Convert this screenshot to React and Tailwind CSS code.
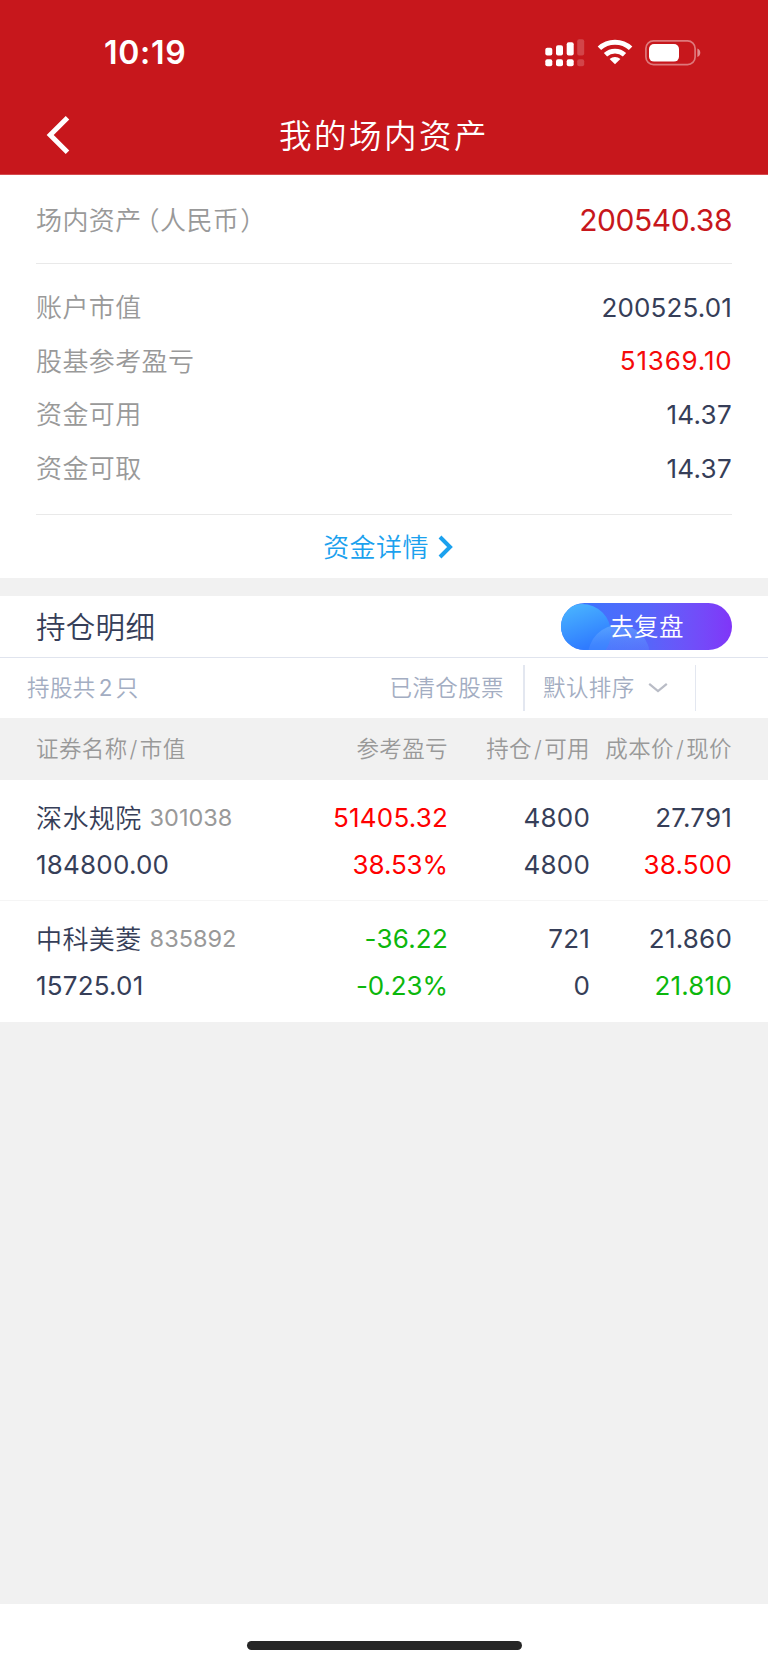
const summary = [
  { label: '账户市值', value: '200525.01', color: 'text-[#363e58] tracking-[0.15px]' },
  { label: '股基参考盈亏', value: '51369.10', color: 'text-[#f50a0a] tracking-[0.8px] -mr-[0.5px]' },
  { label: '资金可用', value: '14.37', color: 'text-[#363e58] tracking-[0.3px]' },
  { label: '资金可取', value: '14.37', color: 'text-[#363e58] tracking-[0.3px]' },
];

const holdings = [
  {
    name: '深水规院',
    code: '301038',
    marketValue: '184800.00',
    profit: '51405.32',
    profitRate: '38.53%',
    amount: '4800',
    available: '4800',
    cost: '27.791',
    price: '38.500',
    color: 'text-[#ff0000]',
  },
  {
    name: '中科美菱',
    code: '835892',
    marketValue: '15725.01',
    profit: '-36.22',
    profitRate: '-0.23%',
    amount: '721',
    available: '0',
    cost: '21.860',
    price: '21.810',
    color: 'text-[#0cb70c]',
  },
];

function SignalIcon() {
  return (
    <svg width="40" height="28" viewBox="0 0 40 28" fill="#fff">
      <rect x="0.3" y="8.7" width="7" height="7.8" rx="2" />
      <rect x="11" y="6.2" width="7" height="10.3" rx="2" />
      <rect x="21.7" y="3.2" width="7" height="13.3" rx="2" />
      <rect x="32.2" y="0.2" width="7" height="16.3" rx="2" opacity="0.2" />
      <rect x="0.3" y="20.2" width="7" height="7" rx="2" />
      <rect x="11" y="20.2" width="7" height="7" rx="2" />
      <rect x="21.7" y="20.2" width="7" height="7" rx="2" />
      <rect x="32.2" y="20.2" width="7" height="7" rx="2" opacity="0.2" />
    </svg>
  );
}

function WifiIcon() {
  return (
    <svg width="36" height="26" viewBox="0 0 36 26" fill="none" stroke="#fff" strokeWidth="5">
      <path d="M2.4 9.3C11 1.1 25 1.1 33.6 9.3" />
      <path d="M8.5 15.8C13.8 10.8 22.2 10.8 27.5 15.8" strokeWidth="4.8" />
      <path d="M18 25.2L12.6 20C15.6 17.3 20.4 17.3 23.4 20Z" fill="#fff" stroke="none" />
    </svg>
  );
}

function BatteryIcon() {
  return (
    <svg width="56" height="26" viewBox="0 0 56 26">
      <rect x="0.9" y="0.9" width="49.2" height="23.8" rx="7.6" fill="none" stroke="#fff" strokeWidth="1.7" opacity="0.42" />
      <rect x="4" y="4" width="30" height="17.6" rx="5" fill="#fff" />
      <path d="M52.4 8.6C54.4 9.4 55.3 11 55.3 12.8S54.4 16.2 52.4 17Z" fill="#fff" opacity="0.5" />
    </svg>
  );
}

function Header() {
  return (
    <header className="h-[175px] bg-[#c7171c] border-b border-[#d54a4e] text-white">
      <div className="h-[97px] pt-2 pl-[104px] pr-[67px] flex items-center justify-between">
        <span className="pt-px text-[32px] font-[580] leading-none tracking-[0.7px]">10:19</span>
        <div className="flex items-center">
          <SignalIcon />
          <span className="ml-3 -mt-px">
            <WifiIcon />
          </span>
          <span className="ml-3">
            <BatteryIcon />
          </span>
        </div>
      </div>
      <div className="h-[76px] px-[46px] grid grid-cols-[60px_1fr_60px] items-center">
        <svg width="24" height="40" viewBox="0 0 24 40" fill="none" stroke="#fff" strokeWidth="5">
          <path d="M21.5 2.8L4.2 20L21.5 37.2" />
        </svg>
        <h1 className="pt-[5px] text-[32.5px] font-[350] leading-none tracking-[2.5px] text-center">我的场内资产</h1>
      </div>
    </header>
  );
}

function Assets() {
  return (
    <section className="bg-white h-[403px] px-9">
      <div className="h-[89px] flex items-center justify-between border-b border-[#e9e9e9]">
        <span className="pt-0.5 text-[26px] font-[350] tracking-[0.4px] text-[#999]">
          场内资产<span className="ml-[5px] [font-feature-settings:'halt']">（</span>人民币<span className="ml-px [font-feature-settings:'halt']">）</span>
        </span>
        <span className="pt-[3px] text-[30px] tracking-[-0.45px] text-[#c7171c]">200540.38</span>
      </div>
      <div className="h-[251px] pt-[17px] border-b border-[#e9e9e9]">
        {summary.map((row) => (
          <div key={row.label} className="h-[53.6px] flex items-center justify-between">
            <span className="text-[26px] font-[350] tracking-[0.4px] text-[#999]">{row.label}</span>
            <span className={`pb-px text-[26px] ${row.color}`}>{row.value}</span>
          </div>
        ))}
      </div>
      <a className="h-[63px] pl-[9px] pt-0.5 flex items-center justify-center text-[#1ba1ee]">
        <span className="text-[26px] font-[350] tracking-[0.4px]">资金详情</span>
        <svg className="ml-2 mb-0.5" width="17" height="24" viewBox="0 0 17 24" fill="none" stroke="currentColor" strokeWidth="4">
          <path d="M3 2L13 12L3 22" />
        </svg>
      </a>
    </section>
  );
}

function ReviewButton() {
  return (
    <button className="relative w-[171px] h-[47px] rounded-full overflow-hidden bg-gradient-to-r from-[#2f78ff] via-[#5566fa] to-[#8035f8]">
      <svg className="absolute inset-0" width="171" height="47" viewBox="0 0 171 47">
        <defs>
          <linearGradient id="bubbleLeft" x1="0" y1="0" x2="0.35" y2="1">
            <stop offset="0.1" stopColor="#49b4ff" />
            <stop offset="0.85" stopColor="#2f7bff" />
          </linearGradient>
          <linearGradient id="bubbleBottom" x1="0" y1="0" x2="0" y2="1">
            <stop offset="0" stopColor="#6bb0ff" stopOpacity="0.6" />
            <stop offset="0.5" stopColor="#5a8cff" stopOpacity="0.2" />
          </linearGradient>
        </defs>
        <circle cx="21" cy="30" r="29" fill="url(#bubbleLeft)" />
        <circle cx="58" cy="53" r="31" fill="url(#bubbleBottom)" />
      </svg>
      <span className="relative top-0.5 text-[24.5px] font-[350] leading-none tracking-[0.4px] text-white">去复盘</span>
    </button>
  );
}

function FilterBar() {
  return (
    <div className="h-[60px] pl-[27px] flex items-center text-[22.5px] font-[350] tracking-[0.4px] text-[#a3adc2]">
      <span className="flex-1">
        持股共<span className="mx-[3px] font-normal">2</span>只
      </span>
      <span>已清仓股票</span>
      <div className="ml-[19px] h-[46px] w-[173px] pl-[18px] flex items-center border-l-2 border-r border-[#e3e7f0]">
        <span>默认排序</span>
        <svg className="ml-[13px]" width="20" height="12" viewBox="0 0 20 12" fill="none" stroke="#b9bcc6" strokeWidth="2.2">
          <path d="M1.2 1.8L10 9L18.8 1.8" />
        </svg>
      </div>
      <div className="w-[72px]" />
    </div>
  );
}

function ColumnTitle({ first, second }) {
  return (
    <span>
      {first}
      <span className="mx-0.5">/</span>
      {second}
    </span>
  );
}

function HoldingRow({ item }) {
  return (
    <div className="h-[121px] pt-[14px] px-9 grid grid-cols-[240px_1fr_142px_142px] auto-rows-[47px] items-center text-right text-[26px] tracking-[0.2px] text-[#363e58] border-b border-[#f5f5f5] last:border-0">
      <div className="text-left flex items-center">
        <span className="pt-0.5 text-[26px] font-[350] tracking-[0.4px]">{item.name}</span>
        <span className="ml-2 text-[23.5px] tracking-normal text-[#999]">{item.code}</span>
      </div>
      <span className={item.color}>{item.profit}</span>
      <span>{item.amount}</span>
      <span>{item.cost}</span>
      <span className="text-left">{item.marketValue}</span>
      <span className={`tracking-[-0.1px] ${item.color}`}>{item.profitRate}</span>
      <span>{item.available}</span>
      <span className={item.color}>{item.price}</span>
    </div>
  );
}

function Holdings() {
  return (
    <section className="mt-[18px] bg-white">
      <div className="h-[62px] px-9 flex items-center justify-between border-b border-[#e0e4ee]">
        <h2 className="pt-px text-[29.5px] font-[350] tracking-[0.3px] text-[#363e58]">持仓明细</h2>
        <ReviewButton />
      </div>
      <FilterBar />
      <div className="h-[62px] pb-px px-9 bg-[#f1f1f1] grid grid-cols-[240px_1fr_142px_142px] items-center text-right text-[22.5px] font-[350] tracking-[0.4px] text-[#999]">
        <span className="text-left">
          <ColumnTitle first="证券名称" second="市值" />
        </span>
        <span>参考盈亏</span>
        <ColumnTitle first="持仓" second="可用" />
        <ColumnTitle first="成本价" second="现价" />
      </div>
      {holdings.map((item) => (
        <HoldingRow key={item.code} item={item} />
      ))}
    </section>
  );
}

export default function App() {
  return (
    <div className="w-full h-[1665px] flex flex-col bg-[#f1f1f1] font-['Inter','Noto_Sans_CJK_SC',sans-serif]">
      <Header />
      <Assets />
      <Holdings />
      <footer className="mt-auto h-[61px] pt-[37px] bg-white flex justify-center">
        <div className="w-[275px] h-[9px] rounded-full bg-[#262626]" />
      </footer>
    </div>
  );
}
